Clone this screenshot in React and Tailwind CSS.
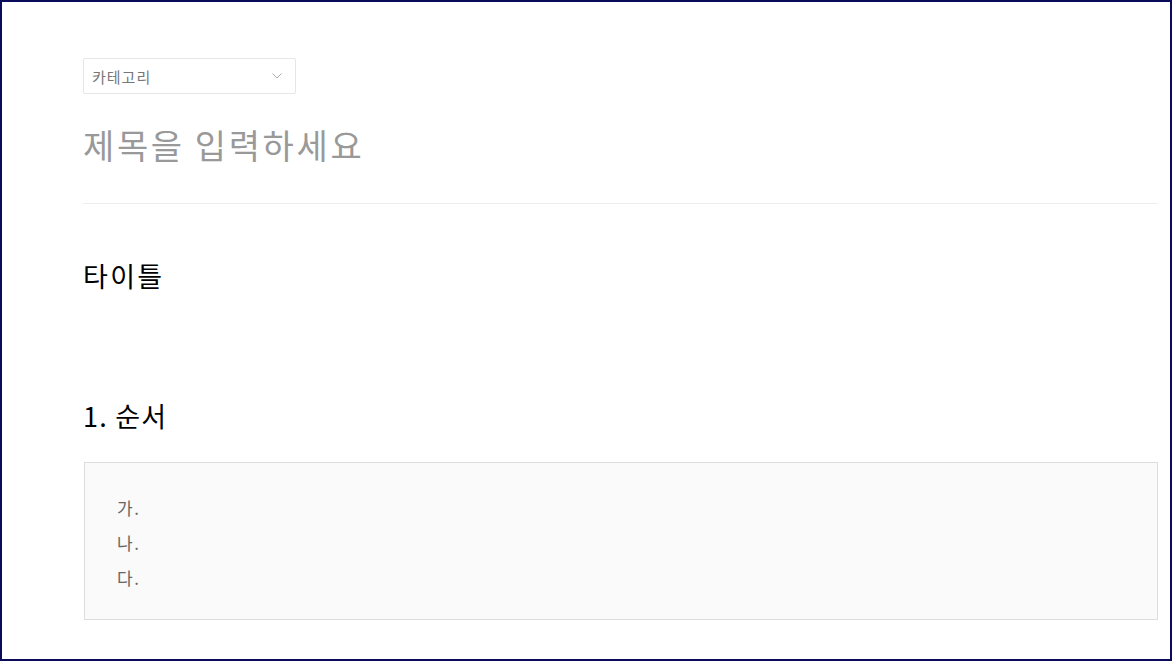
export default function App() {
  const sans = { fontFamily: '"Noto Sans CJK KR", "Noto Sans", sans-serif' };
  return (
    <div className="w-[1172px] h-[661px] box-border border-2 border-[#0b0b5c] bg-white pl-[81px] pr-[12px] pt-[56px] overflow-hidden" style={sans}>
      <div className="w-[213px] h-[36px] box-border border border-[#e6e6e6] rounded-[2px] flex items-center justify-between pl-[8px] pr-[13px]">
        <span className="text-[15px] text-[#777] leading-none tracking-[1px]">카테고리</span>
        <svg width="10" height="6" viewBox="0 0 10 6" fill="none">
          <path d="M0.5 0.5 L5 5 L9.5 0.5" stroke="#aaa" strokeWidth="1" />
        </svg>
      </div>
      <div className="mt-[31px] h-[40px] text-[34px] leading-[40px] text-[#999] tracking-[2.6px]">제목을 입력하세요</div>
      <div className="mt-[38px] h-px bg-[#eeeeee]" />
      <div className="mt-[55px] h-[34px] text-[27px] leading-[34px] text-black tracking-[2.3px]">타이틀</div>
      <div className="mt-[106px] h-[34px] text-[27px] leading-[34px] text-black tracking-[1.2px]">1. 순서</div>
      <div className="mt-[29px] ml-px h-[158px] box-border border border-[#dddddd] bg-[#fafafa] pl-[32px] pt-[27px]">
        <div className="text-[17px] leading-[35px] text-[#666] tracking-[1.5px]">가.</div>
        <div className="text-[17px] leading-[35px] text-[#666] tracking-[1.5px]">나.</div>
        <div className="text-[17px] leading-[35px] text-[#666] tracking-[1.5px]">다.</div>
      </div>
    </div>
  );
}
